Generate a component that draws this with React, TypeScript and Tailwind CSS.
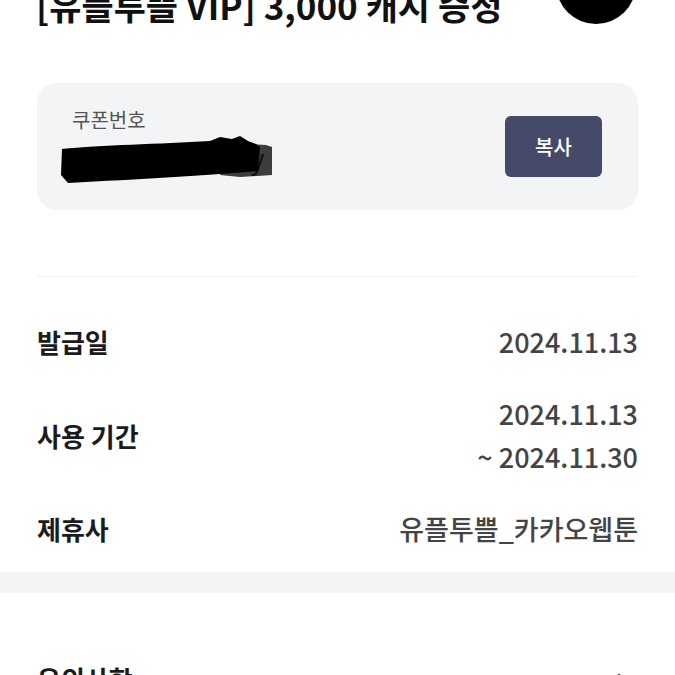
export default function App() {
  const rows = [
    { label: "발급일", values: ["2024.11.13"] },
    { label: "사용 기간", values: ["2024.11.13", "~ 2024.11.30"] },
    { label: "제휴사", values: ["유플투쁠_카카오웹툰"] },
  ]

  return (
    <div
      className="relative h-[675px] w-[675px] overflow-hidden bg-white"
      style={{ fontFamily: '"Noto Sans CJK KR", "Noto Sans", sans-serif' }}
    >
      {/* header, scrolled mostly out of view */}
      <div className="flex h-[24px] items-end justify-between pl-[36px] pr-[39px]">
        <h1 className="mb-[2px] whitespace-nowrap text-[35px] font-bold leading-none text-[#111]">
          [유플투쁠 VIP] 3,000 캐시 증정
        </h1>
        <div className="h-[80px] w-[80px] shrink-0 rounded-full bg-black" />
      </div>

      {/* coupon number card */}
      <div className="mx-[37px] mt-[59px] flex h-[127px] items-center justify-between rounded-[20px] bg-[#f2f4f6] pl-[35px] pr-[36px]">
        <div className="flex flex-col">
          <span className="text-[20px] leading-[24px] text-[#555]">쿠폰번호</span>
          <div className="relative -ml-[12px] mt-[3px] h-[50px] w-[230px]">
            <span className="absolute left-[190px] top-[8px] text-[28px] leading-none text-[#444]">y</span>
            <svg width="230" height="50" viewBox="0 0 230 50" className="absolute inset-0">
              <path
                d="M2 14 C 40 10, 100 9, 150 6 L 160 2 L 172 4 L 180 1 L 188 6 L 196 9 L 200 12 L 198 36 C 150 40, 80 44, 8 48 L 1 40 Z"
                fill="#000"
              />
              <path d="M178 8 L 206 10 L 212 12 L 212 40 L 180 42 L 160 40 Z" fill="#000" opacity="0.75" />
            </svg>
          </div>
        </div>
        <button className="flex h-[61px] w-[97px] items-center justify-center rounded-[6px] bg-[#454a68] text-[20px] font-medium text-white">
          복사
        </button>
      </div>

      <div className="mx-[37px] mt-[66px] h-px bg-[#f1f2f4]" />

      {/* info rows */}
      <div className="mx-[37px] mt-[43px] flex flex-col gap-[29px]">
        {rows.map((row) => (
          <div key={row.label} className="flex items-center justify-between">
            <span className="text-[26px] font-semibold leading-[43px] text-[#1b1b1b]">{row.label}</span>
            <div className="flex flex-col items-end">
              {row.values.map((v) => (
                <span key={v} className="text-[27px] font-medium leading-[43px] text-[#444]">
                  {v}
                </span>
              ))}
            </div>
          </div>
        ))}
      </div>

      <div className="mt-[22px] h-[21px] bg-[#f2f4f6]" />

      {/* notes section */}
      <div className="mt-[70px] flex items-center justify-between pl-[37px] pr-[46px]">
        <span className="text-[26px] font-semibold leading-[32px] text-[#1b1b1b]">유의사항</span>
        <svg width="20" height="12" viewBox="0 0 20 12" fill="none">
          <path d="M2 10 L10 2 L18 10" stroke="#555" strokeWidth="2.5" strokeLinecap="round" strokeLinejoin="round" />
        </svg>
      </div>
    </div>
  )
}
